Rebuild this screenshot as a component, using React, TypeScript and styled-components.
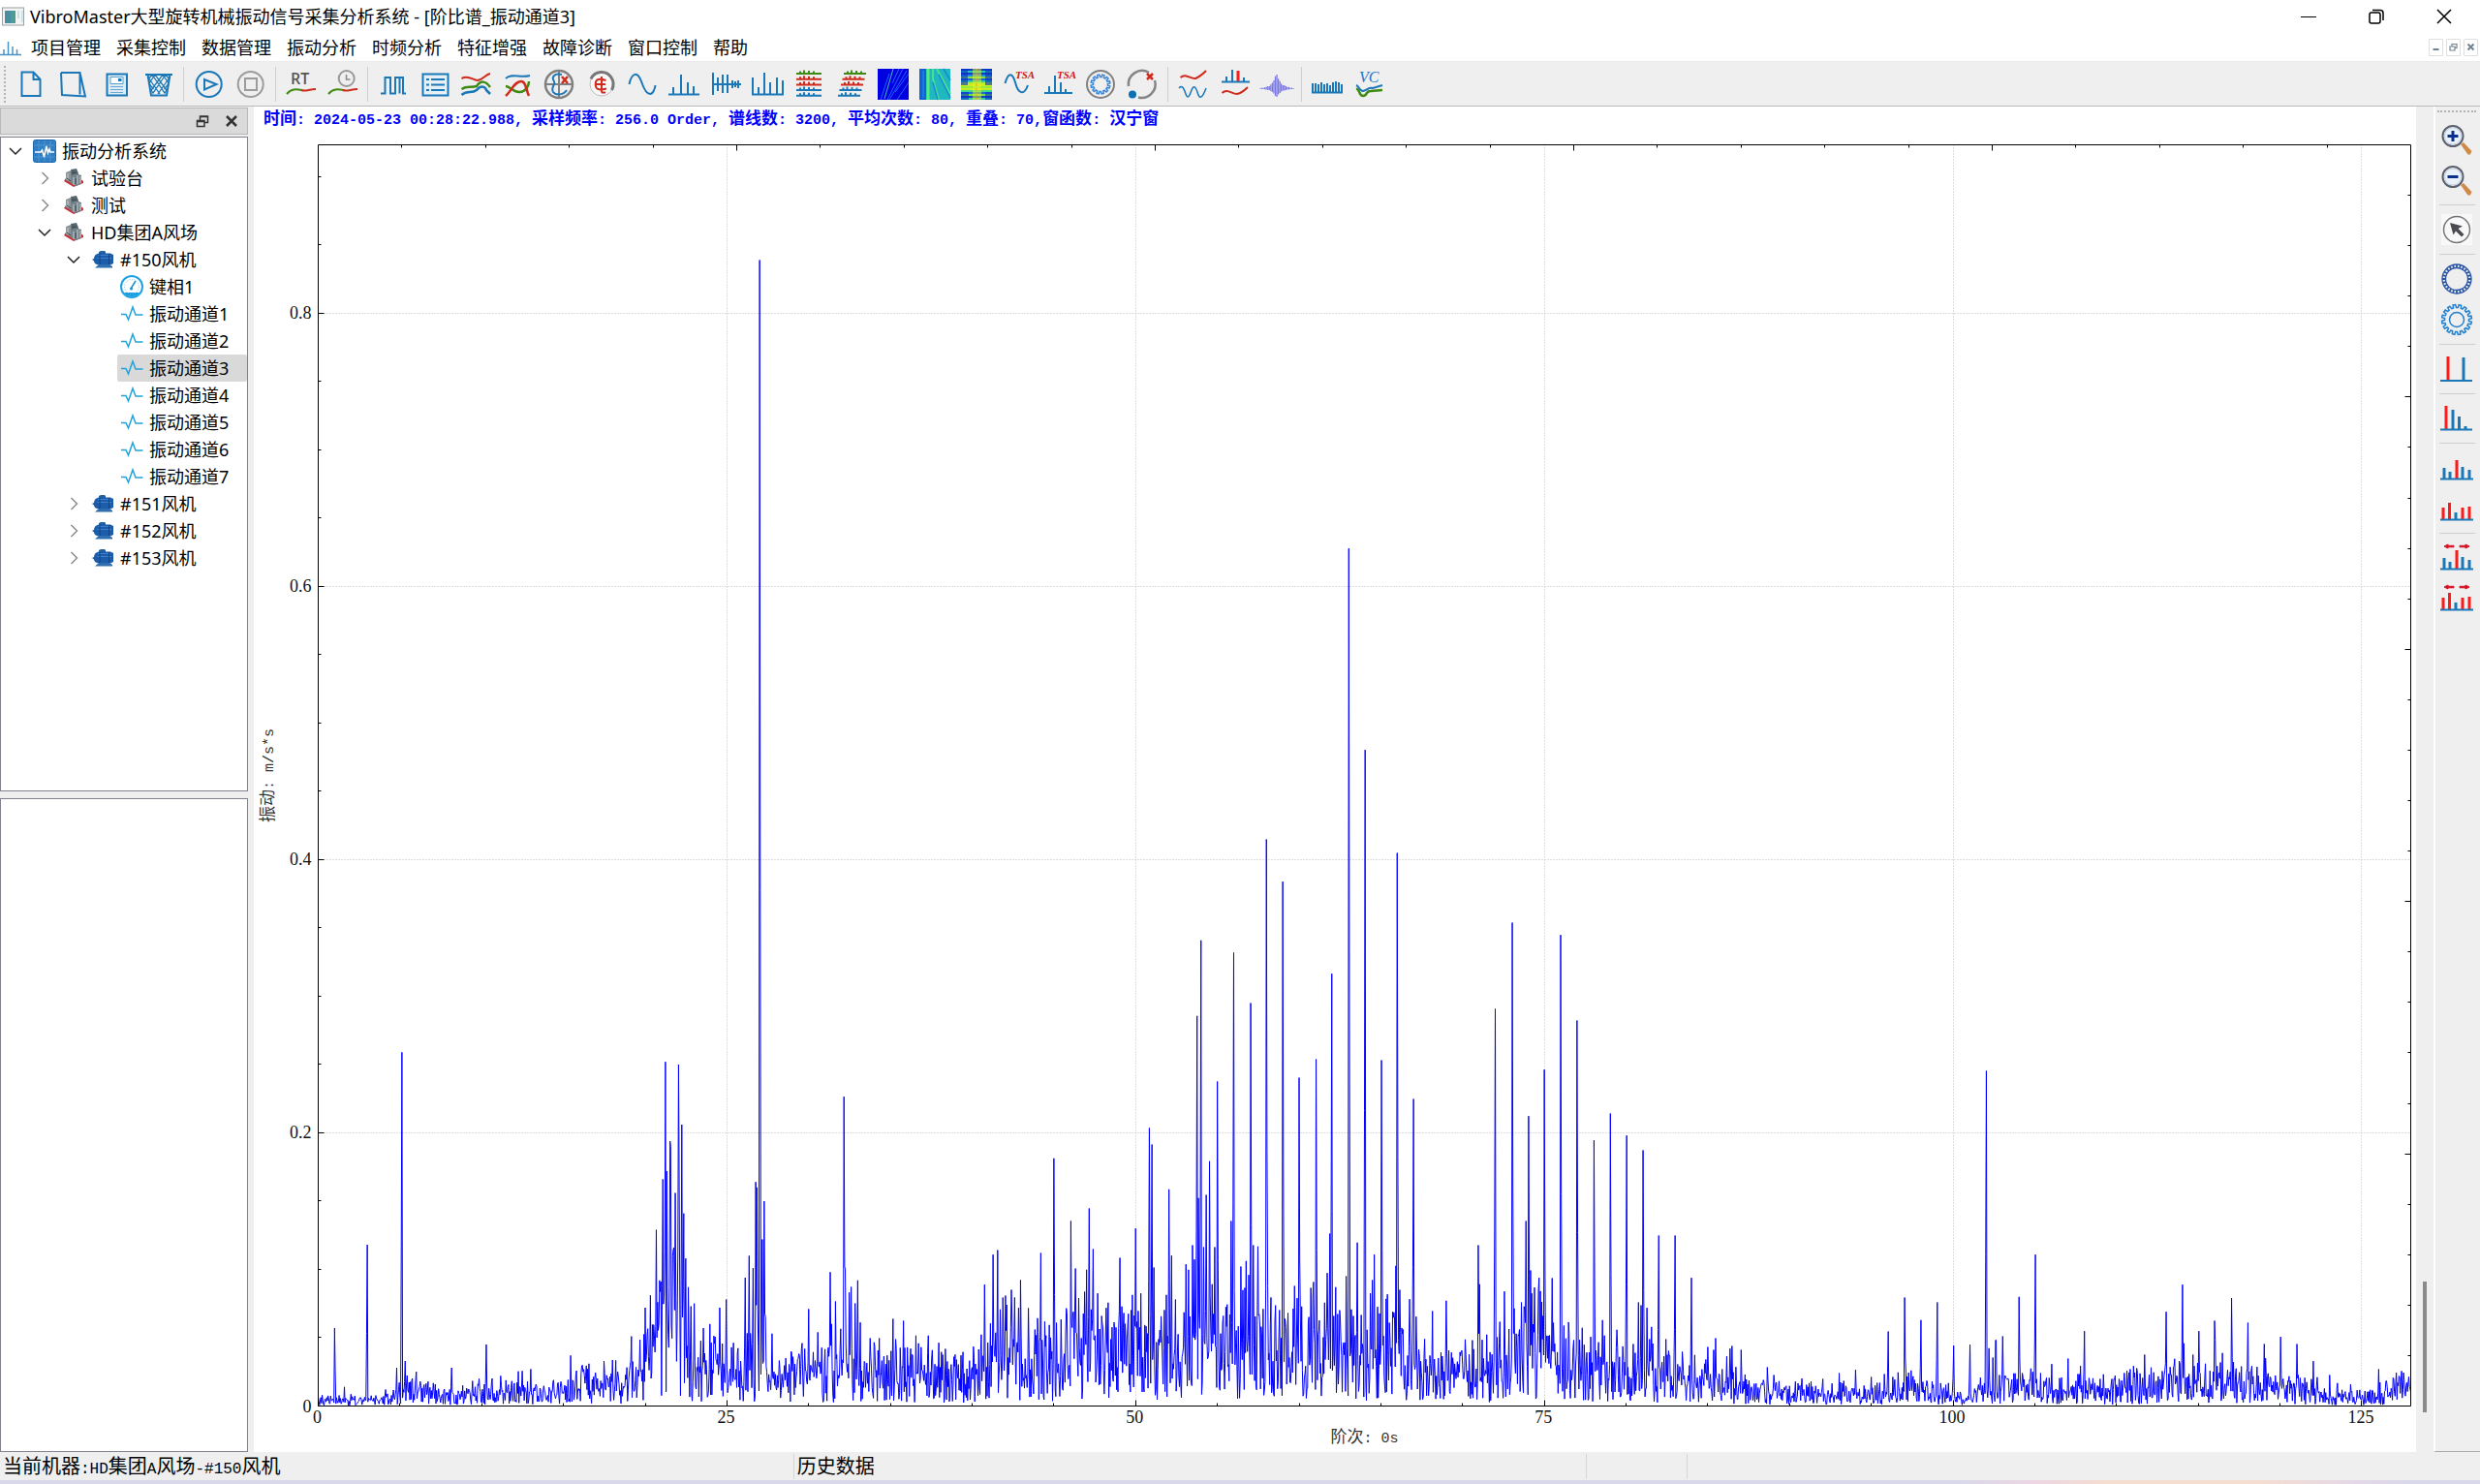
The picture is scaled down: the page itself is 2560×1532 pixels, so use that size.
import React, { useLayoutEffect, useMemo, useRef, useState } from 'react';
import styled, { createGlobalStyle } from 'styled-components';

const UI_FONT = '"Noto Sans", "Noto Sans CJK SC", sans-serif';
const SONG_FONT = '"Noto Sans CJK SC", sans-serif';
const MONO_FONT = '"Liberation Mono", monospace';
const DIGIT_FONT = '"Liberation Serif", serif';
const BLUE = '#1a78b8';
const RED = '#cf2a1b';
const GREEN = '#3f8a12';

const GlobalStyle = createGlobalStyle`
  *, *::before, *::after { box-sizing: border-box; }
  body { margin: 0; background: #efefef; color: #000; font-family: ${UI_FONT}; font-size: 18px; }
  button { font: inherit; color: inherit; border: 0; background: none; padding: 0; margin: 0; }
  svg { display: block; flex: none; }
`;

/* ---------- layout ---------- */

const Shell = styled.div`
  display: flex;
  flex-direction: column;
  height: 100vh;
  overflow: hidden;
`;

const TitleBar = styled.header`
  display: flex;
  align-items: center;
  height: 34px;
  padding: 0 2px;
  background: #fff;
`;

const Title = styled.h1`
  flex: 1;
  margin: 0 0 0 5px;
  font-size: 18px;
  line-height: 34px;
  font-weight: 400;
  white-space: nowrap;
`;

const WindowButton = styled.button`
  display: flex;
  align-items: center;
  justify-content: center;
  width: 70px;
  height: 34px;
`;

const MenuBar = styled.nav`
  display: flex;
  align-items: center;
  height: 30px;
  background: #fff;
  border-bottom: 1px solid #ebebeb;
`;

const MenuList = styled.div`
  display: flex;
  flex: 1;
  gap: 16px;
  margin-left: 10px;
`;

const MenuButton = styled.button`
  line-height: 28px;
  white-space: nowrap;
`;

const ChildControls = styled.div`
  display: flex;
  gap: 3px;
  padding-right: 2px;
`;

const ChildButton = styled.button`
  display: flex;
  align-items: center;
  justify-content: center;
  width: 15px;
  height: 18px;
  background: #fff;
  border: 1px solid #dedede;
  border-radius: 1px;
`;

const ToolBar = styled.div`
  display: flex;
  align-items: center;
  height: 46px;
  padding-left: 4px;
  background: #efefef;
  border-bottom: 1px solid #b9b9b9;
`;

const Grip = styled.span<{ $across?: boolean }>`
  width: ${(p) => (p.$across ? '40px' : '9px')};
  height: ${(p) => (p.$across ? '9px' : '38px')};
  border: 0 dotted #b4b4b4;
  border-width: ${(p) => (p.$across ? '2px 0 0' : '0 0 0 2px')};
`;

const ToolButton = styled.button`
  width: 43px;
  height: 42px;
  padding: 0 5px 0 6px;
`;

const Separator = styled.span<{ $across?: boolean }>`
  width: ${(p) => (p.$across ? '37px' : '1px')};
  height: ${(p) => (p.$across ? '1px' : '36px')};
  margin: ${(p) => (p.$across ? '4px 0' : '0 4px')};
  background: #cfcfcf;
`;

const Workspace = styled.main`
  display: flex;
  flex: 1;
  min-height: 0;
`;

const Dock = styled.aside`
  display: flex;
  flex-direction: column;
  width: 256px;
  padding-top: 1px;
  margin-right: 6px;
`;

const DockHeader = styled.div`
  display: flex;
  align-items: center;
  justify-content: flex-end;
  gap: 16px;
  height: 28px;
  padding-right: 9px;
  margin-bottom: 2px;
  background: #dadada;
  border: 1px solid #b8b8b8;
`;

const DockPanel = styled.section`
  flex: 1;
  min-height: 0;
  background: #fff;
  border: 1px solid #82828f;
  & + & { margin-top: 7px; }
`;

const TreeRow = styled.div<{ $level: number }>`
  display: flex;
  height: 28px;
  padding-left: ${(p) => p.$level * 30}px;
`;

const Expander = styled.button`
  display: flex;
  align-items: center;
  justify-content: center;
  width: 30px;
`;

const TreeItem = styled.button<{ $selected?: boolean }>`
  display: flex;
  flex: 1;
  align-items: center;
  gap: 6px;
  padding-left: 3px;
  border-radius: 2px;
  line-height: 28px;
  white-space: nowrap;
  background: ${(p) => (p.$selected ? '#d9d9d9' : 'transparent')};
`;

const PlotPane = styled.section`
  display: flex;
  flex-direction: column;
  flex: 1;
  min-width: 0;
  background: #fff;
`;

const PlotInfo = styled.p`
  height: 24px;
  margin: 0;
  padding-left: 10px;
  color: #0000ff;
  font-family: ${SONG_FONT};
  font-size: 17px;
  line-height: 22px;
  font-weight: 700;
  white-space: nowrap;
`;

const PlotArea = styled.div`
  flex: 1;
  min-height: 0;
  overflow: hidden;
`;

const Latin = styled.span<{ $size: number }>`
  font-family: ${MONO_FONT};
  font-size: ${(p) => p.$size}px;
  white-space: pre;
`;

const ScrollGutter = styled.div`
  display: flex;
  flex-direction: column;
  align-items: center;
  justify-content: flex-end;
  width: 18px;
  padding-bottom: 41px;
`;

const ScrollThumb = styled.div`
  width: 4px;
  height: 10%;
  background: #8a8a8a;
`;

const SideBar = styled.div`
  display: flex;
  flex-direction: column;
  align-items: center;
  width: 48px;
  padding: 4px 2px 0 0;
  border-left: 2px solid #fff;
  border-bottom: 1px solid #a8a8a8;
`;

const SideButton = styled.button`
  width: 32px;
  height: 42px;
  padding: 5px 0;
`;

const StatusBar = styled.footer`
  display: grid;
  grid-template-columns: 1fr 1fr 104px 1fr;
  align-items: center;
  height: 29px;
  font-family: ${SONG_FONT};
  font-size: 20px;
  line-height: 24px;
`;

const StatusCell = styled.span`
  height: 26px;
  padding-left: 3px;
  white-space: nowrap;
  & + & { border-left: 1px solid #d6d6d6; }
`;

const DesktopEdge = styled.div`
  height: 4px;
  background: linear-gradient(90deg, #d9d8ea 0%, #d9d8ea 79%, #ecd6e2 82%, #f5ddd0 85%, #f5ddd0 91%, #e4d8e8 95%, #d9d8ea 97%);
`;

function SongText({ text, latin }: { text: string; latin: number }) {
  return (
    <>
      {text.split(/([\u4e00-\u9fff]+)/).filter(Boolean).map((run, i) =>
        /[\u4e00-\u9fff]/.test(run) ? run : <Latin key={i} $size={latin}>{run}</Latin>,
      )}
    </>
  );
}

/* ---------- spectrum data ---------- */

const LINES_PER_ORDER = 25;
const MAX_ORDER = 128;
const MAX_LEVEL = 0.9234;

type Segment = { start: number; perOrder: number; zero: number; perUnit: number; marks: number[] };

const SEGMENTS: Segment[] = [
  {
    start: 0, perOrder: 100, zero: 0, perUnit: -1000,
    marks: [
      100, 57, 160, 14, 300, 118, 480, 28, 512, 259, 530, 33, 600, 25, 816, 28, 1028, 45, 1300, 27, 1544, 37, 1657, 31,
      1916, 51, 2000, 72, 2032, 81, 2068, 129, 2086, 92, 2109, 166, 2125, 252, 2130, 172, 2150, 194, 2156, 190, 2168, 110, 2176, 116, 2184, 156, 2202, 250,
      2208, 165, 2225, 206, 2234, 141, 2249, 108, 2265, 87, 2281, 73, 2300, 75, 2357, 57, 2397, 60, 2454, 72, 2497, 78,
      2610, 94, 2635, 110, 2660, 101, 2676, 164, 2685, 160, 2701, 839, 2715, 122, 2726, 150, 2737, 65, 2775, 53, 2890, 40,
      3000, 71, 3057, 54, 3130, 98, 3140, 60,
    ],
  },
  {
    start: 31.496, perOrder: 44.09, zero: 1354, perUnit: 4230,
    marks: [
      7, 1030, 20, 1115, 29, 396, 33, 930, 43, 1002, 48, 985, 59, 1036, 67, 965, 74, 1095, 99, 1144, 112, 1168, 146, 1197,
      162, 1084, 169, 1147, 190, 1090, 209, 1176, 223, 1136, 230, 1160, 256, 1136, 285, 1158, 303, 1177, 345, 1197,
      379, 1170, 400, 1133, 408, 978, 424, 1098, 432, 885, 443, 871, 450, 1055, 458, 1018, 465, 1012, 480, 994, 490, 1018,
      501, 1050, 505, 964, 527, 1051, 545, 1117, 552, 1082, 560, 880, 583, 1103, 596, 587, 603, 1096, 630, 1066,
      641, 781, 648, 1062, 654, 928, 662, 1020, 675, 1068, 679, 1000, 684, 932, 690, 742, 696, 1055, 702, 868, 713, 1005,
      725, 1075, 737, 1050, 742, 1034, 752, 1110, 760, 1120, 773, 895, 779, 1046, 784, 1066, 807, 1010, 816, 804,
      830, 1005, 852, 493, 860, 544, 865, 925, 878, 1147, 884, 1133, 898, 1010, 905, 683, 912, 888, 924, 1024, 946, 1064,
      951, 915, 959, 932, 969, 856, 975, 900, 981, 146, 986, 710, 993, -88, 1000, 862, 1006, 700, 1016, 596, 1023, 977,
      1029, 862, 1037, 349, 1050, 1098, 1060, 1105, 1074, 781, 1081, -50, 1088, 1120, 1099, 922, 1105, 995, 1111, 988,
      1114, 905, 1121, 948, 1126, 106, 1134, 856, 1145, 860, 1150, 1070, 1166, 1085, 1169, -401, 1181, 1018, 1204, 1057,
      1213, -270, 1219, 1090, 1226, 1066, 1244, 982, 1251, 1020, 1257, 337, 1264, 1046, 1281, 1112, 1288, 988, 1295, 970,
      1302, 280, 1310, 1122, 1325, 1034, 1332, 942, 1339, 820, 1345, 15, 1351, 1075, 1356, 986, 1366, 1077, 1384, 952,
      1390, -1302, 1397, 1055, 1403, 1075, 1413, 848, 1425, 1072, 1434, -678, 1449, 1005, 1455, 964, 1460, 885,
      1479, 283, 1485, 1137, 1495, 1008, 1500, 1096, 1510, 1080, 1518, 920, 1522, -359, 1529, 994, 1537, 1117,
      1555, 1023, 1566, 403,
    ],
  },
  {
    start: 67.05, perOrder: 44.09, zero: 1354, perUnit: 4230,
    marks: [
      5, 1077, 14, 1200, 49, 1060, 55, 1215, 86, 1028, 100, 1188, 138, 1148, 160, 1178, 172, 856, 176, 977, 196, 1133,
      219, 124, 231, 1093, 243, 999, 264, -143, 269, 1052, 275, 1130, 284, 1117, 289, 1033, 296, 1046, 301, 781, 308, 456,
      313, 934, 317, 1005, 324, 987, 332, 1135, 337, 957, 340, 1150, 347, 1075, 351, 312, 365, 1135, 371, 958, 376, 1096,
      395, -105, 404, 1105, 409, 1145, 418, 1130, 430, 1150, 439, 160, 453, 1112, 465, 1188, 476, 1140, 484, 531,
      496, 1198, 507, 1088, 512, 1136, 528, 448, 546, 1118, 553, 1202, 572, 516, 590, 1162, 604, 1033, 611, 1042,
      616, 562, 628, 1050, 634, 1147, 640, 1109, 660, 826, 678, 1147, 685, 1183, 704, 826, 722, 1186, 748, 957,
      787, 1210, 792, 1171, 808, 1180, 812, 1144, 831, 1240, 842, 1200, 852, 1176, 857, 1168, 867, 1233, 881, 1180,
      902, 1275, 922, 1284, 952, 1234, 969, 1258, 1012, 1292, 1028, 1278, 1057, 1288, 1082, 1292, 1101, 1270, 1127, 1284,
      1146, 1252, 1163, 1292, 1190, 1242, 1233, 1264, 1268, 1255, 1278, 1123, 1291, 1264, 1305, 1250, 1322, 1018,
      1340, 1244, 1352, 1284, 1366, 1088, 1384, 1284, 1411, 1033, 1421, 1298, 1455, 1167, 1498, 1164, 1527, 1266,
      1542, 316, 1549, 1175, 1560, 1204, 1567, 1150,
    ],
  },
  {
    start: 101.42, perOrder: 50.6, zero: 1204, perUnit: 4230,
    marks: [
      39, 1026, 51, 1054, 61, 1000, 71, 1108, 82, 988, 95, 1120, 120, 1103, 132, 866, 170, 1088, 183, 735, 200, 1102,
      210, 1127, 233, 1074, 265, 1140, 284, 1057, 314, 1105, 322, 1080, 335, 972, 362, 1118, 393, 1106, 420, 1120,
      477, 1090, 487, 1080, 496, 1087, 522, 1045, 550, 1100, 576, 1096, 588, 912, 602, 1108, 620, 1110, 639, 828,
      643, 1010, 671, 1045, 675, 1080, 689, 972, 710, 1073, 724, 1095, 737, 940, 740, 1000, 763, 1040, 778, 1092,
      790, 870, 805, 1088, 841, 946, 852, 1094, 892, 1012, 895, 1056, 911, 1117, 943, 990, 950, 1120, 993, 1012,
      997, 1108, 1023, 1130, 1044, 1065, 1055, 1115, 1094, 1108, 1118, 1133, 1159, 1137, 1246, 1090, 1272, 1145,
      1309, 1111, 1325, 1123, 1338, 1120,
    ],
  },
];

const NOISE_FLOOR: [number, number][] = [
  [0, 0.012], [1, 0.008], [4, 0.01], [5, 0.026], [6, 0.024], [8, 0.017], [10, 0.02], [12, 0.026], [15, 0.022],
  [16, 0.034], [19, 0.036], [20, 0.055], [21, 0.11], [22.2, 0.11], [22.8, 0.065], [24, 0.055], [25.5, 0.045], [26.5, 0.065],
  [27.3, 0.055], [28, 0.042], [31, 0.05], [33, 0.06], [34, 0.05], [38, 0.046], [40, 0.05], [42, 0.072], [50, 0.075],
  [53, 0.065], [55, 0.09], [66, 0.075], [67, 0.055], [71, 0.045], [73, 0.065], [75, 0.085], [76, 0.06], [80, 0.05],
  [83, 0.045], [85, 0.035], [87, 0.024], [95, 0.018], [97, 0.026], [101, 0.014], [103, 0.029], [110, 0.022], [112, 0.032],
  [117, 0.036], [120, 0.026], [124, 0.013], [126, 0.016], [128, 0.032],
];

function floorAt(order: number): number {
  for (let i = 1; i < NOISE_FLOOR.length; i += 1) {
    const [x1, y1] = NOISE_FLOOR[i];
    const [x0, y0] = NOISE_FLOOR[i - 1];
    if (order <= x1) return y0 + ((y1 - y0) * (order - x0)) / (x1 - x0);
  }
  return 0.02;
}

function buildSpectrum(): number[] {
  let seed = 20240523;
  const random = () => {
    seed = (seed * 1664525 + 1013904223) >>> 0;
    return seed / 4294967296;
  };
  const levels: number[] = [];
  for (let i = 0; i <= MAX_ORDER * LINES_PER_ORDER; i += 1) {
    const r = random();
    levels.push(floorAt(i / LINES_PER_ORDER) * (0.05 + 1.02 * r * (0.5 + 0.5 * random())));
  }
  SEGMENTS.forEach(({ start, perOrder, zero, perUnit, marks }) => {
    for (let i = 0; i < marks.length; i += 2) {
      const line = Math.round((start + marks[i] / perOrder) * LINES_PER_ORDER);
      const value = Math.abs((zero - marks[i + 1]) / perUnit);
      if (line > 0 && line < levels.length) {
        levels[line] = Math.max(levels[line], value);
        if (value > 0.04) {
          const side = random() > 0.5 ? line + 1 : line - 1;
          levels[side] = Math.max(levels[side], value * 0.45);
        }
      }
    }
  });
  return levels;
}

const MARGIN = { left: 66, top: 15, right: 6, bottom: 48 };

function Spectrum() {
  const host = useRef<HTMLDivElement>(null);
  const [size, setSize] = useState({ w: 1200, h: 800 });
  const levels = useMemo(buildSpectrum, []);

  useLayoutEffect(() => {
    const node = host.current;
    if (!node) return undefined;
    const measure = () => setSize({ w: node.clientWidth, h: node.clientHeight });
    measure();
    const observer = new ResizeObserver(measure);
    observer.observe(node);
    return () => observer.disconnect();
  }, []);

  const left = MARGIN.left + 0.5;
  const top = MARGIN.top + 0.5;
  const right = size.w - MARGIN.right + 0.5;
  const bottom = size.h - MARGIN.bottom + 0.5;
  const px = (order: number) => left + ((right - left) * order) / MAX_ORDER;
  const py = (level: number) => bottom - ((bottom - top) * level) / MAX_LEVEL;
  const snap = (v: number) => Math.floor(v) + 0.5;

  let ticks = '';
  for (let o = 0; o <= 125; o += 5) ticks += `M${snap(px(o))} ${bottom}v${o % 25 ? -3 : -6}`;
  for (let i = 0; i <= 18; i += 1) ticks += `M${left} ${snap(py(i * 0.05))}h${i % 4 ? 3 : 6}`;
  for (let i = 1; i < 25; i += 1) {
    ticks += `M${snap(left + ((right - left) * i) / 25)} ${top}v${i % 5 ? 3 : 6}`;
    ticks += `M${right} ${snap(bottom - ((bottom - top) * i) / 25)}h${i % 5 ? -3 : -6}`;
  }
  let grid = '';
  [25, 50, 75, 100, 125].forEach((o) => { grid += `M${snap(px(o))} ${top}V${bottom}`; });
  [0.2, 0.4, 0.6, 0.8].forEach((l) => { grid += `M${left} ${snap(py(l))}H${right}`; });
  const trace = levels.map((l, i) => `${i ? 'L' : 'M'}${px(i / LINES_PER_ORDER).toFixed(2)} ${py(l).toFixed(1)}`).join('');
  const middle = (top + bottom) / 2;

  return (
    <PlotArea ref={host}>
      <svg width={size.w} height={size.h} role="img" aria-label="阶比谱">
        <path d={grid} stroke="#bcbcbc" strokeDasharray="1 2" fill="none" />
        <path d={trace} stroke="#0000ff" strokeWidth="1" strokeLinejoin="bevel" fill="none" />
        <path d={ticks} stroke="#000" fill="none" />
        <path d={`M${left} ${top}H${right}V${bottom}H${left}Z`} stroke="#000" fill="none" />
        <g fontFamily={DIGIT_FONT} fontSize="18" fill="#111">
          {[0, 25, 50, 75, 100, 125].map((o) => (
            <text key={o} x={px(o) - 1} y={bottom + 17} textAnchor="middle">{o}</text>
          ))}
          {['0', '0.2', '0.4', '0.6', '0.8'].map((l) => (
            <text key={l} x={left - 7} y={py(Number(l)) + 6} textAnchor="end">{l}</text>
          ))}
        </g>
        <g fontFamily={SONG_FONT} fontSize="17" fill="#333">
          <text x={(left + right) / 2} y={bottom + 37} textAnchor="middle">
            阶次<tspan fontFamily={MONO_FONT} fontSize="15" xmlSpace="preserve">: 0s</tspan>
          </text>
          <text transform={`translate(20 ${middle}) rotate(-90)`} textAnchor="middle">
            振动<tspan fontFamily={MONO_FONT} fontSize="15">: m/s*s</tspan>
          </text>
        </g>
      </svg>
    </PlotArea>
  );
}

/* ---------- icons ---------- */

function Glyph({ children, size = 32, box = 32 }: { children: React.ReactNode; size?: number; box?: number }) {
  return (
    <svg width={size} height={size} viewBox={`0 0 ${box} ${box}`} fill="none" overflow="visible" aria-hidden="true">
      {children}
    </svg>
  );
}

type Bar = [x: number, top: number, red?: boolean];

function Bars({ bars, base, from, to, width = 2 }: { bars: Bar[]; base: number; from: number; to: number; width?: number }) {
  return (
    <g strokeWidth={width}>
      {bars.map(([x, y, red]) => (
        <path key={x} d={`M${x} ${base}V${y}`} stroke={red ? '#ff1a1a' : BLUE} strokeWidth={red ? 3 : width} />
      ))}
      <path d={`M${from} ${base}H${to}`} stroke={BLUE} strokeWidth="2" />
    </g>
  );
}

function Wave() {
  return (
    <>
      <path d="M1 26C6 20 11 21 17 22" stroke={GREEN} strokeWidth="2" />
      <path d="M16 22C20 24 24 21 31 21" stroke={RED} strokeWidth="2" />
    </>
  );
}

function Tsa() {
  return (
    <text x="13" y="10" fontFamily='"Liberation Serif", serif' fontSize="11" fontStyle="italic" fontWeight="700" fill="#d01818">
      TSA
    </text>
  );
}

function rows(slant: number) {
  const colors = [GREEN, RED, RED, BLUE, BLUE];
  return colors.map((c, i) => {
    const y = 5 + i * 5.7;
    const dx = slant * (4 - i);
    return (
      <path key={y} stroke={c} strokeWidth="2"
        d={`M${2 + dx} ${y}h${slant ? 23 : 26}M${6 + dx} ${y}v-2.500M${10 + dx} ${y}v-3.500M${15 + dx} ${y}v-3M${20 + dx} ${y}v-2.500`} />
    );
  });
}

function gearPath(cx: number, cy: number, inner: number, outer: number, teeth: number) {
  let d = '';
  for (let i = 0; i < teeth; i += 1) {
    [[0, inner], [0.28, inner], [0.36, outer], [0.78, outer], [0.9, inner]].forEach(([t, r], k) => {
      const a = ((i + t) / teeth) * Math.PI * 2;
      d += `${i || k ? 'L' : 'M'}${(cx + r * Math.cos(a)).toFixed(2)} ${(cy + r * Math.sin(a)).toFixed(2)}`;
    });
  }
  return `${d}Z`;
}

function spokes(cx: number, cy: number, inner: number, outer: number, count: number) {
  let d = '';
  for (let i = 0; i < count; i += 1) {
    const a = (i / count) * Math.PI * 2;
    d += `M${(cx + inner * Math.cos(a)).toFixed(2)} ${(cy + inner * Math.sin(a)).toFixed(2)}L${(cx + outer * Math.cos(a)).toFixed(2)} ${(cy + outer * Math.sin(a)).toFixed(2)}`;
  }
  return d;
}

const burst = [0.5, 1, 1, 1.5, 2, 3, 3, 5, 7, 10, 15, 17, 12, 9, 6, 4, 4, 3, 2, 2, 1, 1, 0.5];
const hot = ['#0b3fd0', '#23c8b0', '#123ad0', '#1f8fe0', '#7fe04a', '#1560e0', '#29d0a0', '#b8e830', '#c8f020', '#9be83a', '#c4ee22', '#40d890', '#1a70e0', '#70e050', '#1840c8', '#2bc8b8'];

const MAIN_TOOLS: { label: string; art: React.ReactNode }[][] = [
  [
    { label: '新建', art: <path d="M3.500 3.500h12l7 7.500v17h-19zM15.500 3.500v7.500h7" stroke={BLUE} strokeWidth="2" /> },
    { label: '打开', art: <path d="M1 4H20.500V26.500M1 4L2 27L26 28.500L20.500 4" stroke={BLUE} strokeWidth="2" /> },
    {
      label: '保存',
      art: (
        <>
          <rect x="5.500" y="5.500" width="20.500" height="22" fill="#dcebf4" stroke={BLUE} strokeWidth="2" />
          <path d="M9 8.500h13v7h-13z" fill="#fff" stroke="#5aa0cc" />
          <path d="M17 10h3.500v3h-3.500z" fill={BLUE} />
          <path d="M9 18.500h13M9 21.500h13M9 24.500h13" stroke="#6aaad2" />
        </>
      ),
    },
    {
      label: '删除',
      art: (
        <>
          <path d="M2 6H30M4.500 6L8 27.500H24L27.500 6" stroke={BLUE} strokeWidth="2" />
          <path d="M5 11l4-5 13 19 2-3-12-16-6 9M5 9l12 17M27 11l-4-5-13 19-2-3 12-16 6 9M27 9l-12 17M5.500 15l5 6M26.500 15l-5 6" stroke={BLUE} strokeWidth="1.300" />
        </>
      ),
    },
  ],
  [
    { label: '开始', art: <><circle cx="15.700" cy="16" r="13" stroke={BLUE} strokeWidth="2" /><path d="M11 11v10.500L23.500 16z" stroke={BLUE} strokeWidth="2" /></> },
    { label: '停止', art: <><circle cx="15.700" cy="16" r="13" stroke="#9c9c9c" strokeWidth="2" /><path d="M10 10h12v12h-12z" stroke="#9c9c9c" strokeWidth="2" /></> },
  ],
  [
    { label: '实时', art: <><text x="5" y="16" fontFamily='"Open Sans", sans-serif' fontSize="16" fontWeight="600" fill="#555">RT</text><Wave /></> },
    { label: '历史', art: <><circle cx="19.700" cy="10" r="8" stroke="#999" strokeWidth="2" /><path d="M19.500 6v5h4" stroke="#888" strokeWidth="1.500" /><Wave /></> },
  ],
  [
    { label: '转速', art: <path d="M3 25.500H7.500V9H13V25.500H18V9H22.500V25.500M13 9V25.500M22.500 25.500V9H26V25.500H29" stroke={BLUE} strokeWidth="2" /> },
    {
      label: '列表',
      art: (
        <>
          <rect x="3.500" y="5.500" width="26" height="22" fill="#e6f0f6" stroke={BLUE} strokeWidth="2" />
          <path d="M7 11h3M7 16.500h3M7 22h3M12 11h14M12 16.500h14M12 22h14" stroke={BLUE} strokeWidth="2" />
        </>
      ),
    },
    {
      label: '趋势',
      art: (
        <>
          <path d="M.500 10C8 6 12 12 17 12C23 11 25 6 30 5" stroke={RED} strokeWidth="2" />
          <path d="M.500 21C6 17 10 20 16 18C20 12 25 12 30 19" stroke={GREEN} strokeWidth="2.500" />
          <path d="M.500 27C6 22 11 26 16 22C20 17 25 18 26 22L30 26" stroke={BLUE} strokeWidth="2.500" />
        </>
      ),
    },
    {
      label: '多趋势',
      art: (
        <>
          <path d="M3 10C10 4 18 10 28 7" stroke={BLUE} strokeWidth="2" />
          <path d="M3 18C8 18 11 25 18 24C24 23 27 18 27 13" stroke={GREEN} strokeWidth="2.500" />
          <path d="M3 28C9 23 12 13 19 13C24 13 24 22 27 28" stroke={RED} strokeWidth="2.500" />
        </>
      ),
    },
    {
      label: '轴心轨迹',
      art: (
        <>
          <circle cx="15" cy="16" r="14" stroke="#808080" strokeWidth="2.500" />
          <path d="M15 2v28M1 16h28" stroke="#808080" strokeWidth="2" />
          <path d="M18 6C10 4 7 9 10 13C12 16 6 19 9 24C12 28 20 27 23 22" stroke={BLUE} strokeWidth="2" />
          <path d="M18 8l6 7M24 8l-6 7" stroke={RED} strokeWidth="2.500" />
        </>
      ),
    },
    {
      label: '轴心位置',
      art: (
        <>
          <circle cx="16" cy="16" r="12" fill="#f8f8f8" stroke="#bdbdbd" />
          <path d="M5 10.500A12 12 0 0 1 26 9A13 13 0 0 1 26.500 22" stroke="#777" strokeWidth="3" />
          <path d="M20.500 12C11 9 9 12 10 18C10.500 22 15 22 21 20.500M16 8v16.500M10 16h10M16 24.500h4" stroke={RED} strokeWidth="2" />
        </>
      ),
    },
    { label: '波形', art: <path d="M1.500 16C4 4 10 2 14 13C17 22 20 26 23 26C26 26 28 21 28.500 17" stroke={BLUE} strokeWidth="2" /> },
    { label: '频谱', art: <Bars base={26.5} from={-1} to={31} bars={[[4, 19], [12, 6], [19, 14], [25, 18]]} /> },
    { label: '双边谱', art: <path d="M2 4v23M7 9v14M12 6v19M17 6v19M22 12v8M25 13v6M28 12v8M2 16h29" stroke={BLUE} strokeWidth="2" /> },
    { label: '阶比谱', art: <Bars base={26.5} from={-1} to={32} bars={[[0, 9], [6, 19], [12, 4], [18, 14], [25, 9], [31, 12]]} /> },
    { label: '瀑布图', art: rows(0) },
    { label: '三维谱', art: rows(1.5) },
    {
      label: '时频图',
      art: (
        <>
          <path d="M0 0h32v32H0z" fill="#0000e0" />
          <path d="M7 31L16 0" stroke="#40c0c0" />
          <path d="M12 32L30 2M18 24L32 5M3 32L12 5M10 32L26 0" stroke="#2060ff" />
          <path d="M20 32L32 14M15 15L22 0" stroke="#3a8cf0" strokeWidth=".700" />
        </>
      ),
    },
    {
      label: '阶比图',
      art: (
        <>
          <path d="M0 0h32v32H0z" fill="#20b8c0" />
          <path d="M0 0h7v32H0z" fill="#1060d8" />
          <path d="M9 0v32" stroke="#50f080" strokeWidth="3" />
          <path d="M14 0v10l6 22M18 0l14 26" stroke="#48e090" strokeWidth="2" />
          <path d="M14 14l5 18M20 6l12 24M25 0l7 12M4 2v28" stroke="#1888d8" strokeWidth="1.500" />
        </>
      ),
    },
    {
      label: '小波图',
      art: (
        <>
          {hot.map((c, i) => <path key={c} d={`M0 ${i * 2}h32v2h-32z`} fill={c} />)}
          <path d="M0 0h7v17h-7zM25 0h7v17h-7zM0 24h8v8h-8zM25 24h7v8h-7z" fill="#0a2fc0" opacity=".600" />
          <path d="M12 0h9v32h-9z" fill="#e8f020" opacity=".500" />
          <path d="M16 0v32" stroke="#f0a020" strokeDasharray="3 2" />
        </>
      ),
    },
    { label: '时域同步平均', art: <><path d="M2.500 15C6 3 10 4 13 14C16 26 22 28 26 17" stroke={BLUE} strokeWidth="2" /><Tsa /></> },
    { label: '同步平均谱', art: <><Bars base={25} from={0} to={29} bars={[[5, 18], [11, 7], [17, 14], [22, 21]]} /><Tsa /></> },
    {
      label: '齿轮',
      art: (
        <>
          <circle cx="15" cy="16" r="14" stroke="#808080" strokeWidth="2" />
          <path d={gearPath(15, 16, 7.5, 10, 12)} stroke="#3a86d8" strokeWidth="1.500" />
        </>
      ),
    },
    {
      label: '轴承',
      art: (
        <>
          <path d="M1 18A14 14 0 0 1 22 4M28 12A14 14 0 0 1 11 29.500" stroke="#858585" strokeWidth="2.500" />
          <circle cx="5" cy="26.500" r="4" fill="#0f6fb3" />
          <path d="M20 5l6 6M26 5l-6 6" stroke={RED} strokeWidth="2.500" />
        </>
      ),
    },
  ],
  [
    {
      label: '滤波',
      art: (
        <>
          <path d="M2.500 9C8 4 13 11 18 10C23 8 26 5 29 2" stroke={RED} strokeWidth="2" />
          <path d="M1 20C4 16 6 20 8 26C10 32 12 28 14 22C16 17 18 18 20 24C22 32 25 31 29 20" stroke={BLUE} strokeWidth="1.500" />
        </>
      ),
    },
    {
      label: '包络谱',
      art: (
        <>
          <Bars base={13.5} from={2} to={31} bars={[[7, 8], [13, 1], [19, 2, true], [25, 9]]} />
          <path d="M2.500 25C8 20 12 26 18 26C23 25 26 22 29 19" stroke={RED} strokeWidth="2" />
        </>
      ),
    },
    {
      label: '小波',
      art: burst.map((h, i) => <path key={i} d={`M${-1 + i * 1.55} ${20.5 - h * 0.85}V${20.5 + h * 0.5}`} stroke="#7a78e4" strokeWidth="1.300" />),
    },
  ],
  [
    {
      label: '倒频谱',
      art: <Bars base={24.5} from={0} to={32} bars={[[1, 15], [4, 15], [7, 16], [10, 14], [13, 16], [16, 15], [19, 17], [22, 14], [25, 13], [28, 14], [31, 16]]} />,
    },
    {
      label: 'VC',
      art: (
        <>
          <text x="6" y="14" fontFamily='"Liberation Serif", serif' fontSize="16" fontStyle="italic" fill="#1a78c8">VC</text>
          <path d="M3 21C7 20 5 28 10 28C15 28 12 23 18 23L30 22" stroke={GREEN} strokeWidth="2.500" />
          <path d="M3 17C6 18 6 23 10 23C15 22 15 19 20 20L30 17" stroke={BLUE} strokeWidth="2" />
        </>
      ),
    },
  ],
];

function Lens({ plus }: { plus?: boolean }) {
  return (
    <>
      <path d="M20 21l3-2 8.500 9-1.500 3.500-2.500 0z" fill="#d08a48" />
      <circle cx="12" cy="12.500" r="10.500" fill="#e9f1fb" stroke="#5c5f6c" strokeWidth="2" />
      <circle cx="12" cy="12.500" r="8.500" stroke="#c8d0dc" />
      <path d={plus ? 'M6.500 12.500h11M12 7v11' : 'M6.500 12.500h11'} stroke="#0a2f8c" strokeWidth="3" />
    </>
  );
}

const arrows = <path d="M3 4l4-2v1.300h6v1.500h-6V6zM29 4l-4-2v1.300h-6v1.500h6V6z" fill="#d81024" stroke="#d81024" />;
const sideband: Bar[] = [[3, 16], [9, 20], [16, 8, true], [22, 15], [29, 18]];
const sidebands: Bar[] = [[2, 15, true], [8.5, 10, true], [15, 20], [22, 15, true], [29, 14, true]];

const SIDE_TOOLS: { label: string; art: React.ReactNode }[][] = [
  [{ label: '放大', art: <Lens plus /> }, { label: '缩小', art: <Lens /> }],
  [
    {
      label: '选择',
      art: (
        <>
          <path d="M0 0h32v32H0z" fill="#f8f8fa" />
          <circle cx="16" cy="16" r="13.500" stroke="#777" strokeWidth="1.500" />
          <path d="M9 9l13 3.500-4.500 2.500 6 6-2.500 2.500-6-6-2.500 4z" fill="#4a4a50" />
        </>
      ),
    },
  ],
  [
    {
      label: '轴承库',
      art: (
        <>
          <circle cx="16" cy="16" r="15" stroke="#2a55a4" strokeWidth="1.300" />
          <circle cx="16" cy="16" r="11.500" stroke="#2a55a4" strokeWidth="1.300" />
          <path d={spokes(16, 16, 11.5, 15, 24)} stroke="#2a55a4" strokeWidth="1.800" />
        </>
      ),
    },
    { label: '齿轮库', art: <><path d={gearPath(16, 16, 12.5, 15.5, 16)} stroke="#2080d0" strokeWidth="1.500" /><circle cx="16" cy="16" r="7.500" stroke="#2080d0" strokeWidth="1.500" /></> },
  ],
  [{ label: '单光标', art: <Bars base={28} from={-1} to={32} width={3} bars={[[7, 3, true], [23, 4]]} /> }],
  [{ label: '谐波光标', art: <Bars base={27.5} from={-1} to={32} width={3} bars={[[5, 3, true], [12, 7], [18.5, 14], [25, 24]]} /> }],
  [
    { label: '边带光标', art: <Bars base={27.5} from={-1} to={33} width={3} bars={sideband} /> },
    { label: '多边带光标', art: <Bars base={27.5} from={-1} to={33} width={3} bars={sidebands} /> },
  ],
  [
    { label: '移动边带', art: <>{arrows}<Bars base={27.5} from={-1} to={33} width={3} bars={sideband} /></> },
    { label: '移动多边带', art: <>{arrows}<Bars base={27.5} from={-1} to={33} width={3} bars={sidebands} /></> },
  ],
];

type Kind = 'root' | 'plant' | 'motor' | 'gauge' | 'channel';

const TREE_ART: Record<Kind, React.ReactNode> = {
  root: (
    <>
      <rect x=".500" y=".500" width="23" height="23" rx="2" fill="#2f7ec4" stroke="#1d68ad" />
      <path d="M1 6h22M1 18h22M6 1v22M12 1v22M18 1v22" stroke="#5a9dd6" strokeWidth=".700" />
      <path d="M2 13h6l1.500-2 2 7 2.500-11 1.500 7 1.500-4 1 3h4" stroke="#fff" strokeWidth="1.500" />
    </>
  ),
  plant: (
    <>
      <path d="M2 15l10 6 10-4v-2l-4-3-14 0z" fill="#c0343c" />
      <path d="M4 6l5-2 3 3v11l-8-4z" fill="#8a9498" />
      <path d="M9 3l6-1 2 5-1 4h-6z" fill="#56656c" />
      <path d="M9 10l5-3 6 2v9l-6 2-5-3z" fill="#74838a" />
      <path d="M6 7v7M12 11v8M16 9v9M19 10v7" stroke="#c8d0d2" />
      <path d="M10 6l5 1M14 12v6M5 12l4 3" stroke="#39464e" />
    </>
  ),
  motor: (
    <>
      <path d="M8 6V4l2-1h4l1 1v2z" fill="#2a5f9c" />
      <path d="M1 12l2-1C3 8 5 6 8 5.500H20l3 1.500v9l-3 1.500H8C5 17 3 16 3 13.500z" fill="#1b5cab" />
      <path d="M7 7.500h13M6 10.500h15" stroke="#3a80cc" />
      <path d="M9 6v11M18.500 6v11" stroke="#0f4384" />
      <path d="M4 20.500h18v-1.500l-3-2H8z" fill="#2f6fb0" />
    </>
  ),
  gauge: (
    <>
      <path d="M4 18h16a10 10 0 0 1-16 0z" fill="#129be0" />
      <circle cx="12" cy="12" r="11" stroke="#1ea2e2" strokeWidth="2" />
      <circle cx="12" cy="12" r="7.500" stroke="#7cc8ee" strokeDasharray="1 1.500" />
      <path d="M11 14l5-8" stroke="#1a8fd0" strokeWidth="1.500" />
      <circle cx="11.500" cy="14" r="1.500" fill="#1a8fd0" />
    </>
  ),
  channel: <path d="M1 12.500h5l2.500 5.500L13 5l3 8h7.500" stroke="#1ea4dc" strokeWidth="1.500" />,
};

type Node = { label: string; level: number; kind: Kind; open?: boolean };

const TREE: Node[] = [
  { label: '振动分析系统', level: 0, kind: 'root', open: true },
  { label: '试验台', level: 1, kind: 'plant', open: false },
  { label: '测试', level: 1, kind: 'plant', open: false },
  { label: 'HD集团A风场', level: 1, kind: 'plant', open: true },
  { label: '#150风机', level: 2, kind: 'motor', open: true },
  { label: '键相1', level: 3, kind: 'gauge' },
  ...[1, 2, 3, 4, 5, 6, 7].map((n): Node => ({ label: `振动通道${n}`, level: 3, kind: 'channel' })),
  { label: '#151风机', level: 2, kind: 'motor', open: false },
  { label: '#152风机', level: 2, kind: 'motor', open: false },
  { label: '#153风机', level: 2, kind: 'motor', open: false },
];

const MENUS = ['项目管理', '采集控制', '数据管理', '振动分析', '时频分析', '特征增强', '故障诊断', '窗口控制', '帮助'];

/* ---------- page ---------- */

export default function App() {
  const [selected, setSelected] = useState('振动通道3');

  return (
    <Shell>
      <GlobalStyle />
      <TitleBar>
        <Glyph size={24} box={24}>
          <rect x=".500" y="3" width="22" height="18" fill="#f4f4f4" stroke="#9aa0a4" />
          <rect x="3" y="6" width="11" height="13" fill="#4c9c94" />
          <path d="M3 6h6v13h-6z" fill="#4683a8" opacity=".600" />
          <path d="M16 6h2v8h-2zM20 6h1.500v12h-1.500z" fill="#c4e0e4" />
        </Glyph>
        <Title>VibroMaster大型旋转机械振动信号采集分析系统 - [阶比谱_振动通道3]</Title>
        <WindowButton aria-label="最小化"><Glyph size={16} box={16}><path d="M0 8.500h16" stroke="#000" /></Glyph></WindowButton>
        <WindowButton aria-label="还原">
          <Glyph size={16} box={16}>
            <rect x="1" y="4" width="11" height="11" rx="2" stroke="#000" strokeWidth="1.500" />
            <path d="M4 1.500h8a3 3 0 0 1 3 3v7.500" stroke="#000" strokeWidth="1.500" />
          </Glyph>
        </WindowButton>
        <WindowButton aria-label="关闭"><Glyph size={16} box={16}><path d="M1 1l14 14M15 1L1 15" stroke="#000" strokeWidth="1.500" /></Glyph></WindowButton>
      </TitleBar>

      <MenuBar>
        <Glyph size={22} box={22}>
          <path d="M0 18.500h22M4 18v-5M8.500 18V5M13 18v-8M17.500 18v-5" stroke="#4a94c4" strokeWidth="1.500" />
        </Glyph>
        <MenuList>
          {MENUS.map((m) => <MenuButton key={m}>{m}</MenuButton>)}
        </MenuList>
        <ChildControls>
          <ChildButton aria-label="最小化子窗口"><Glyph size={9} box={9}><path d="M1.500 7h6" stroke="#6f8494" strokeWidth="2" /></Glyph></ChildButton>
          <ChildButton aria-label="还原子窗口"><Glyph size={9} box={9}><path d="M1 4h5v4h-5zM3 4V1.500h5v4h-2" stroke="#6f8494" strokeWidth="1.200" /></Glyph></ChildButton>
          <ChildButton aria-label="关闭子窗口"><Glyph size={9} box={9}><path d="M1.500 1.500l6 6M7.500 1.500l-6 6" stroke="#6f8494" strokeWidth="2" /></Glyph></ChildButton>
        </ChildControls>
      </MenuBar>

      <ToolBar role="toolbar">
        <Grip />
        {MAIN_TOOLS.map((group, g) => (
          <React.Fragment key={group[0].label}>
            {g > 0 && <Separator />}
            {group.map((tool) => (
              <ToolButton key={tool.label} aria-label={tool.label}><Glyph>{tool.art}</Glyph></ToolButton>
            ))}
          </React.Fragment>
        ))}
      </ToolBar>

      <Workspace>
        <Dock>
          <DockHeader>
            <button aria-label="浮动">
              <Glyph size={14} box={14}><path d="M1.500 6.500h7.500v6h-7.500zM1.500 7.500h7.500M4.500 6V2h8v6.500h-3M4.500 2.500h8" stroke="#333" strokeWidth="1.500" /></Glyph>
            </button>
            <button aria-label="关闭面板">
              <Glyph size={14} box={14}><path d="M2 2l10 10M12 2L2 12" stroke="#333" strokeWidth="2.500" /></Glyph>
            </button>
          </DockHeader>
          <DockPanel role="tree">
            {TREE.map((node) => (
              <TreeRow key={node.label} $level={node.level} role="none">
                <Expander aria-label={`展开 ${node.label}`} disabled={node.open === undefined}>
                  {node.open !== undefined && (
                    <Glyph size={14} box={14}>
                      <path d={node.open ? 'M1 4l6 6 6-6' : 'M4.500 1l6 6-6 6'} stroke={node.open ? '#222' : '#8c8c8c'} strokeWidth="1.500" />
                    </Glyph>
                  )}
                </Expander>
                <TreeItem
                  role="treeitem"
                  aria-selected={selected === node.label}
                  $selected={selected === node.label}
                  onClick={() => setSelected(node.label)}
                >
                  <Glyph size={24} box={24}>{TREE_ART[node.kind]}</Glyph>
                  {node.label}
                </TreeItem>
              </TreeRow>
            ))}
          </DockPanel>
          <DockPanel />
        </Dock>

        <PlotPane>
          <PlotInfo>
            <SongText latin={15} text="时间: 2024-05-23 00:28:22.988, 采样频率: 256.0 Order, 谱线数: 3200, 平均次数: 80, 重叠: 70,窗函数: 汉宁窗" />
          </PlotInfo>
          <Spectrum />
        </PlotPane>

        <ScrollGutter><ScrollThumb /></ScrollGutter>

        <SideBar role="toolbar">
          <Grip $across />
          {SIDE_TOOLS.map((group, g) => (
            <React.Fragment key={group[0].label}>
              {g > 0 && <Separator $across />}
              {group.map((tool) => (
                <SideButton key={tool.label} aria-label={tool.label}><Glyph>{tool.art}</Glyph></SideButton>
              ))}
            </React.Fragment>
          ))}
        </SideBar>
      </Workspace>

      <StatusBar>
        <StatusCell><SongText latin={16} text="当前机器:HD集团A风场-#150风机" /></StatusCell>
        <StatusCell>历史数据</StatusCell>
        <StatusCell />
        <StatusCell />
      </StatusBar>
      <DesktopEdge />
    </Shell>
  );
}
